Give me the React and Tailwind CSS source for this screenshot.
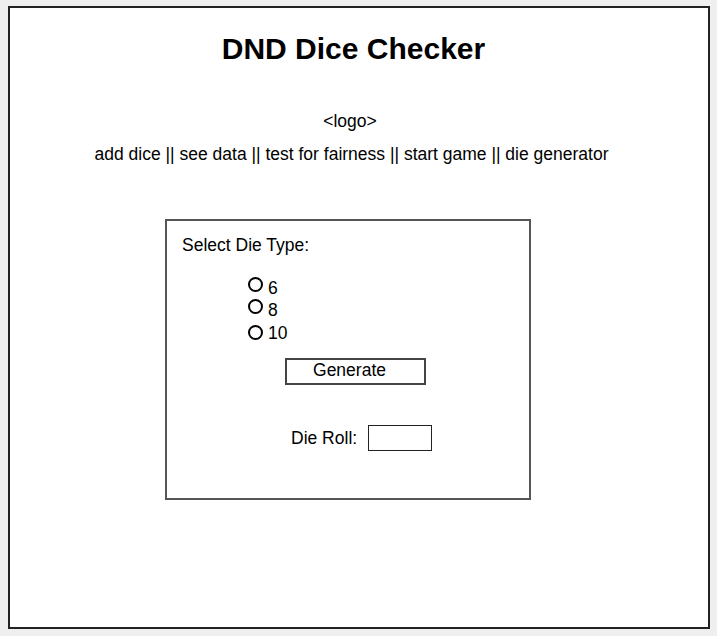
import React, { useState } from "react";

const dieTypes = [
  { value: 6, gap: "mt-0", dot: "mt-0" },
  { value: 8, gap: "mt-[1px]", dot: "mt-0" },
  { value: 10, gap: "mt-[2px]", dot: "mt-[3px]" },
];

function RadioRow({ value, selected, onSelect, className, dotClass }) {
  return (
    <div className={"flex items-start " + className} onClick={() => onSelect(value)}>
      <span
        className={
          "flex h-[15px] w-[15px] items-center justify-center rounded-full border-2 border-black " + dotClass
        }
      >
        {selected === value && <span className="h-[7px] w-[7px] rounded-full bg-black" />}
      </span>
      <span className="ml-[5px] mt-[1px] text-[17.5px] leading-[20px]">{value}</span>
    </div>
  );
}

export default function App() {
  const [die, setDie] = useState(null);
  const [roll, setRoll] = useState("");

  const generate = () => {
    if (!die) return;
    setRoll(String(Math.floor(Math.random() * die) + 1));
  };

  return (
    <div className="min-h-[636px] w-full bg-[#efefef] pt-[6px] pl-[8px] font-['Liberation_Sans',Arial,sans-serif] text-black">
      <div className="h-[623px] w-[702px] border-2 border-[#222] bg-white">
        {/* header */}
        <h1 className="pr-[11px] pt-[24px] text-center text-[30px] font-bold leading-[34px]">DND Dice Checker</h1>
        <p className="mt-[45px] pr-[18px] text-center text-[17.5px] leading-[20px]">&lt;logo&gt;</p>
        <p className="mt-[13px] pr-[15px] text-center text-[17.5px] leading-[20px]">
          add dice || see data || test for fairness || start game || die generator
        </p>

        {/* die generator panel */}
        <div className="ml-[155px] mt-[55px] h-[281px] w-[366px] border-2 border-[#555]">
          <p className="ml-[15px] mt-[14px] text-[17.5px] leading-[20px]">Select Die Type:</p>

          <div className="ml-[81px] mt-[22px]">
            {dieTypes.map((d) => (
              <RadioRow
                key={d.value}
                value={d.value}
                selected={die}
                onSelect={setDie}
                className={d.gap}
                dotClass={d.dot}
              />
            ))}
          </div>

          <button
            onClick={generate}
            className="ml-[118px] mt-[15px] flex h-[27px] w-[141px] items-start justify-center border-2 border-[#444] pr-[12px] text-[17.5px] leading-[20px]"
          >
            Generate
          </button>

          <div className="ml-[124px] mt-[40px] flex items-center">
            <span className="text-[17.5px] leading-[20px]">Die Roll:</span>
            <div className="ml-[11px] flex h-[26px] w-[64px] items-center justify-center border-[1.5px] border-[#222] text-[17.5px]">
              {roll}
            </div>
          </div>
        </div>
      </div>
    </div>
  );
}
